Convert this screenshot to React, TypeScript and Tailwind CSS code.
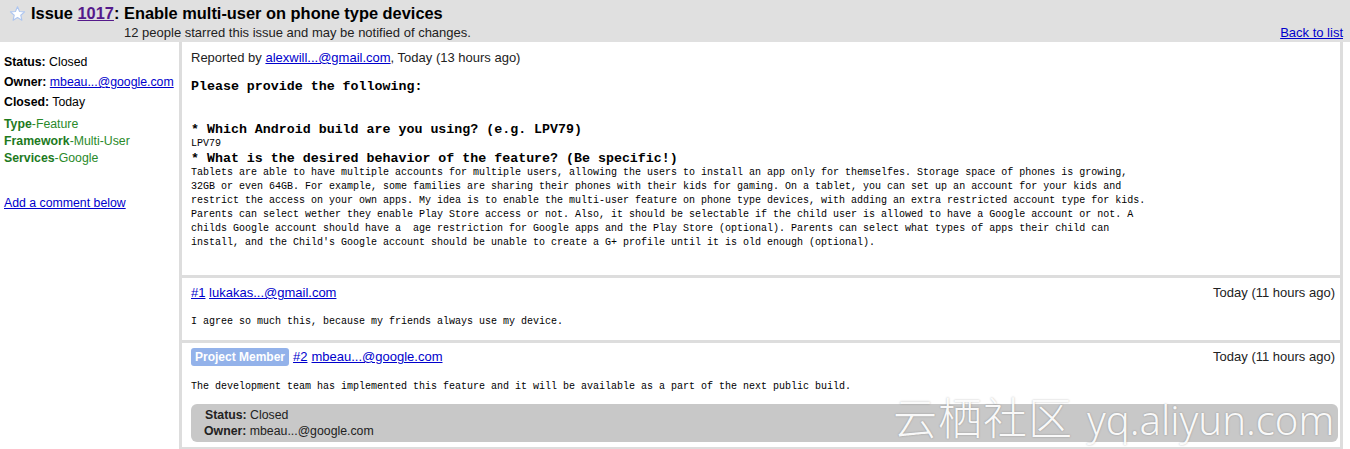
import React from "react";

const descLines = [
  "Tablets are able to have multiple accounts for multiple users, allowing the users to install an app only for themselfes. Storage space of phones is growing,",
  "32GB or even 64GB. For example, some families are sharing their phones with their kids for gaming. On a tablet, you can set up an account for your kids and",
  "restrict the access on your own apps. My idea is to enable the multi-user feature on phone type devices, with adding an extra restricted account type for kids.",
  "Parents can select wether they enable Play Store access or not. Also, it should be selectable if the child user is allowed to have a Google account or not. A",
  "childs Google account should have a  age restriction for Google apps and the Play Store (optional). Parents can select what types of apps their child can",
  "install, and the Child's Google account should be unable to create a G+ profile until it is old enough (optional).",
];

function Star() {
  return (
    <svg width="17" height="17" viewBox="0 0 24 24" className="shrink-0">
      <path
        d="M12 2.5l2.9 6.6 7.1.6-5.4 4.7 1.6 7-6.2-3.8-6.2 3.8 1.6-7L2 9.7l7.1-.6z"
        fill="#ffffff"
        stroke="#aec6f0"
        strokeWidth="1.6"
        strokeLinejoin="round"
      />
    </svg>
  );
}

const mono = "font-['Liberation_Mono',monospace]";

export default function App() {
  return (
    <div className="relative w-[1350px] h-[449px] overflow-hidden bg-white text-black font-['Liberation_Sans',Arial,sans-serif]">
      {/* header */}
      <div className="flex h-[42px] bg-[#e0e0e0] justify-between">
        <div className="flex items-start pl-[9px] pt-[4px]">
          <div className="pt-[1px]">
            <Star />
          </div>
          <div className="ml-[5px]">
            <div className="text-[16.4px] leading-[19px] font-bold">
              Issue <a className="text-[#551a8b] underline">1017</a>: Enable multi-user on phone type devices
            </div>
            <div className="ml-[93px] mt-[2px] text-[13px] leading-[16px] text-[#222]">
              12 people starred this issue and may be notified of changes.
            </div>
          </div>
        </div>
        <div className="flex items-end pr-[7px] pb-[1px]">
          <a className="text-[13px] leading-[16px] text-[#0000cc] underline">Back to list</a>
        </div>
      </div>

      {/* body */}
      <div className="flex">
        {/* sidebar */}
        <div className="w-[179px] shrink-0 pl-[4px] pt-[13px] text-[12.3px] leading-[14px]">
          <div>
            <b>Status:</b> Closed
          </div>
          <div className="mt-[6px]">
            <b>Owner:</b> <a className="text-[#0000cc] underline">mbeau...@google.com</a>
          </div>
          <div className="mt-[6px]">
            <b>Closed:</b> Today
          </div>
          <div className="mt-[8px] text-[#2a8a2a]">
            <b className="text-[#1d7a1d]">Type</b>-Feature
          </div>
          <div className="mt-[3px] text-[#2a8a2a]">
            <b className="text-[#1d7a1d]">Framework</b>-Multi-User
          </div>
          <div className="mt-[3px] text-[#2a8a2a]">
            <b className="text-[#1d7a1d]">Services</b>-Google
          </div>
          <div className="mt-[31px]">
            <a className="text-[#0000cc] underline">Add a comment below</a>
          </div>
        </div>

        {/* main */}
        <div className="w-[1164px] shrink-0 border-l-[3px] border-r-[3px] border-[#dddddd]">
          {/* description */}
          <div className="pl-[9px] pt-[9px] pb-[25px] border-b-[3px] border-[#dddddd]">
            <div className="text-[13px] leading-[14px] text-[#222]">
              Reported by <a className="text-[#0000cc] underline">alexwill...@gmail.com</a>, Today (13 hours ago)
            </div>
            <div className={`${mono} mt-[14px] whitespace-pre`}>
              <div className="text-[13.3px] leading-[15px] font-bold">Please provide the following:</div>
              <div className="h-[14px]" />
              <div className="h-[14px]" />
              <div className="text-[13.3px] leading-[15px] font-bold">* Which Android build are you using? (e.g. LPV79)</div>
              <div className="text-[10px] leading-[14px]">LPV79</div>
              <div className="text-[13.3px] leading-[15px] font-bold">* What is the desired behavior of the feature? (Be specific!)</div>
              {descLines.map((l, i) => (
                <div key={i} className="text-[10px] leading-[14px]">
                  {l}
                </div>
              ))}
            </div>
          </div>

          {/* comment 1 */}
          <div className="pl-[9px] pr-[5px] pt-[8px] pb-[11px] border-b-[3px] border-[#dddddd]">
            <div className="flex justify-between text-[13px] leading-[14px]">
              <div>
                <a className="text-[#0000cc] underline">#1</a>{" "}
                <a className="text-[#0000cc] underline">lukakas...@gmail.com</a>
              </div>
              <div className="text-[#222]">Today (11 hours ago)</div>
            </div>
            <div className={`${mono} mt-[15px] text-[10px] leading-[14px] whitespace-pre`}>
              I agree so much this, because my friends always use my device.
            </div>
          </div>

          {/* comment 2 */}
          <div className="pl-[9px] pr-[2px] pt-[5px] pb-[5px] border-b-[3px] border-[#dddddd]">
            <div className="flex justify-between items-center text-[13px] leading-[14px] pr-[3px]">
              <div className="flex items-center">
                <span className="rounded-[3px] bg-[#93b2ea] px-[4px] py-[2px] text-[12px] leading-[14px] font-bold text-white">
                  Project Member
                </span>
                <a className="ml-[4px] text-[#0000cc] underline">#2</a>
                <a className="ml-[4px] text-[#0000cc] underline">mbeau...@google.com</a>
              </div>
              <div className="text-[#222]">Today (11 hours ago)</div>
            </div>
            <div className={`${mono} mt-[14px] text-[10px] leading-[14px] whitespace-pre`}>
              The development team has implemented this feature and it will be available as a part of the next public build.
            </div>
            <div className="mt-[10px] rounded-[6px] bg-[#c8c8c8] pl-[13px] pt-[3px] pb-[3px] text-[12.3px] leading-[16px] text-[#222]">
              <div className="pl-[1px]">
                <b>Status:</b> Closed
              </div>
              <div>
                <b>Owner:</b> mbeau...@google.com
              </div>
            </div>
          </div>
        </div>
      </div>

      {/* watermark */}
      <div className="pointer-events-none absolute left-[893px] top-[390px] flex items-baseline text-white/95 [text-shadow:0_0_2px_rgba(0,0,0,0.28)]">
        <span className="font-['Noto_Sans_CJK_SC',sans-serif] text-[44px] leading-[52px] font-light tracking-[1px]">云栖社区</span>
        <span className="ml-[14px] font-['Noto_Sans','Liberation_Sans',sans-serif] text-[40px] leading-[52px] font-light">yq.aliyun.com</span>
      </div>
    </div>
  );
}
